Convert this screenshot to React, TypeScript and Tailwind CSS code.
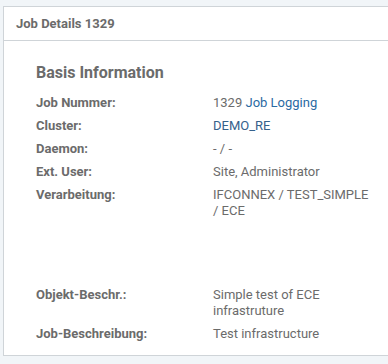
const rows: { label: string; value: React.ReactNode }[] = [
  {
    label: "Job Nummer:",
    value: (
      <>
        1329 <span className="text-[#2a6aa3]">Job Logging</span>
      </>
    ),
  },
  { label: "Cluster:", value: <span className="text-[#35618b]">DEMO_RE</span> },
  { label: "Daemon:", value: "- / -" },
  { label: "Ext. User:", value: "Site, Administrator" },
  { label: "Verarbeitung:", value: "IFCONNEX / TEST_SIMPLE / ECE" },
];

const rows2 = [
  { label: "Objekt-Beschr.:", value: "Simple test of ECE infrastruture" },
  { label: "Job-Beschreibung:", value: "Test infrastructure" },
];

function Row({ label, value }: { label: string; value: React.ReactNode }) {
  return (
    <div className="flex">
      <div className="w-[177px] shrink-0 font-bold">{label}</div>
      <div className="w-[160px]">{value}</div>
    </div>
  );
}

export default function App() {
  return (
    <div
      className="h-[364px] overflow-hidden bg-[#f1f5f8] pt-[6px] pl-[3px] text-[#6b6b6b]"
      style={{ fontFamily: "Roboto, 'Liberation Sans', sans-serif" }}
    >
      <div className="w-[400px] border border-[#cfd4d8] bg-white">
        <div className="h-[34px] border-b border-[#cfd4d8] pl-[12px] flex items-center text-[13px] font-bold">
          Job Details 1329
        </div>
        <div className="pl-[32px] pt-[22px] pb-[13px]">
          <h2 className="text-[16px] font-bold leading-[20px]">Basis Information</h2>
          <div className="mt-[12px] flex flex-col gap-[7px] text-[13px] leading-[16px]">
            {rows.map((r) => (
              <Row key={r.label} label={r.label} value={r.value} />
            ))}
            <div className="h-[54px]" />
            {rows2.map((r) => (
              <Row key={r.label} label={r.label} value={r.value} />
            ))}
          </div>
        </div>
      </div>
    </div>
  );
}
